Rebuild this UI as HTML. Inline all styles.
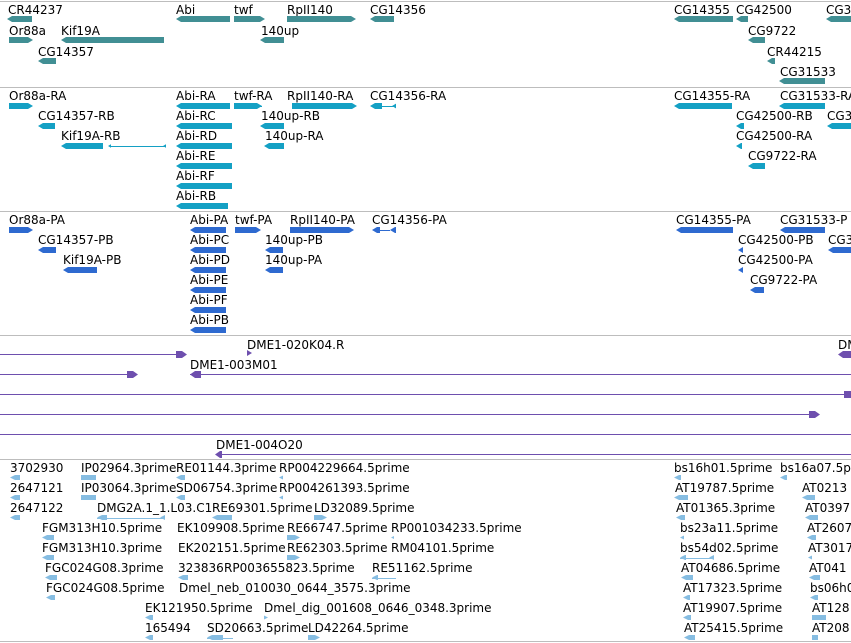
<!DOCTYPE html>
<html><head><meta charset="utf-8"><style>
body{margin:0;width:851px;height:643px;background:#fff;position:relative;overflow:hidden;font-family:"DejaVu Sans","Liberation Sans",sans-serif;font-size:12px;color:#000}
.t{position:absolute;white-space:nowrap;line-height:14px}
.b{position:absolute}
.s{position:absolute;left:0;width:851px;height:1px;background:#bdbdbd}
.L{clip-path:polygon(0 50%,5px 0,100% 0,100% 100%,5px 100%)}
.R{clip-path:polygon(0 0,calc(100% - 5px) 0,100% 50%,calc(100% - 5px) 100%,0 100%)}
</style></head><body>
<div id="c"></div>
<script>
var h='';
function T(x,y,s){h+='<div class="t" style="left:'+x+'px;top:'+(y+1)+'px">'+s+'</div>';}
function B(x,y,w,c,d,ht){ht=ht||6;h+='<div class="b '+(d||'')+'" style="left:'+x+'px;top:'+y+'px;width:'+w+'px;height:'+ht+'px;background:'+c+'"></div>';}
function Ln(x,y,w,c){h+='<div class="b" style="left:'+x+'px;top:'+y+'px;width:'+w+'px;height:1px;background:'+c+'"></div>';}
[1,87,211,335,459,641].forEach(function(y){h+='<div class="s" style="top:'+y+'px"></div>';});
var c1='#418f94';
[[8,2,'CR44237'],[176,2,'Abi'],[234,2,'twf'],[287,2,'RpII140'],[370,2,'CG14356'],[674,2,'CG14355'],[736,2,'CG42500'],[826,2,'CG3'],
[9,23,'Or88a'],[61,23,'Kif19A'],[261,23,'140up'],[748,23,'CG9722'],[38,44,'CG14357'],[767,44,'CR44215'],[780,64,'CG31533']].forEach(function(a){T(a[0],a[1],a[2]);});
[[7,16,25,'L'],[176,16,54,'L'],[234,16,31,'R'],[287,16,69,'R'],[370,16,24,'L'],[674,16,59,'L'],[736,16,12,'L'],[826,16,25,'L'],
[9,37,24,'R'],[61,37,103,'L'],[260,37,24,'L'],[748,37,17,'L'],[38,58,18,'L'],[767,58,8,'L'],[779,78,46,'L']].forEach(function(a){B(a[0],a[1],a[2],c1,a[3]);});
function track(c,dy,labels,bars,lines){labels.forEach(function(a){T(a[0],a[1]+dy,a[2]);});bars.forEach(function(a){B(a[0],a[1]+dy,a[2],c,a[3]);});(lines||[]).forEach(function(a){Ln(a[0],a[1]+dy,a[2],c);});}
var c2='#14a0c4';
track(c2,0,[[9,88,'Or88a-RA'],[176,88,'Abi-RA'],[234,88,'twf-RA'],[287,88,'RpII140-RA'],[370,88,'CG14356-RA'],[674,88,'CG14355-RA'],[780,88,'CG31533-RA'],
[38,108,'CG14357-RB'],[176,108,'Abi-RC'],[261,108,'140up-RB'],[736,108,'CG42500-RB'],[827,108,'CG3'],
[61,128,'Kif19A-RB'],[176,128,'Abi-RD'],[265,128,'140up-RA'],[736,128,'CG42500-RA'],
[176,148,'Abi-RE'],[748,148,'CG9722-RA'],[176,168,'Abi-RF'],[176,188,'Abi-RB']],
[[9,103,24,'R'],[176,103,54,'L'],[234,103,28,'R'],[292,103,65,'R'],[370,103,12,'L'],[392,103,4,'L'],[674,103,58,'L'],[779,103,46,'L'],
[38,123,17,'L'],[176,123,56,'L'],[260,123,24,'L'],[736,123,8,'L'],[827,123,24,'L'],
[61,143,42,'L'],[108,143,3,'L'],[163,143,3,'L'],[176,143,56,'L'],[264,143,20,'L'],[736,143,6,'L'],
[176,163,56,'L'],[748,163,17,'L'],[176,183,56,'L'],[176,203,52,'L']],
[[110,146,55],[234,106,28],[382,106,12]]);
var c3='#2e6ad0';
track(c3,0,[[9,212,'Or88a-PA'],[190,212,'Abi-PA'],[235,212,'twf-PA'],[290,212,'RpII140-PA'],[372,212,'CG14356-PA'],[676,212,'CG14355-PA'],[780,212,'CG31533-P'],
[38,232,'CG14357-PB'],[190,232,'Abi-PC'],[265,232,'140up-PB'],[738,232,'CG42500-PB'],[828,232,'CG3'],
[63,252,'Kif19A-PB'],[190,252,'Abi-PD'],[265,252,'140up-PA'],[738,252,'CG42500-PA'],
[190,272,'Abi-PE'],[750,272,'CG9722-PA'],[190,292,'Abi-PF'],[190,312,'Abi-PB']],
[[9,227,24,'R'],[190,227,36,'L'],[235,227,26,'R'],[290,227,64,'R'],[372,227,8,'L'],[390,227,6,'L'],[676,227,57,'L'],[780,227,45,'L'],
[38,247,18,'L'],[190,247,36,'L'],[265,247,18,'L'],[738,247,5,'L'],[828,247,23,'L'],
[63,267,34,'L'],[190,267,36,'L'],[265,267,18,'L'],[738,267,5,'L'],
[190,287,36,'L'],[750,287,14,'L'],[190,307,36,'L'],[190,327,36,'L']],[[380,230,10]]);
var c4='#6e4fae';
T(247,337,'DME1-020K04.R');T(190,357,'DME1-003M01');T(216,437,'DME1-004O20');T(838,337,'DM');
Ln(0,354,178,c4);B(176,351,11,c4,'R',7);B(247,350,5,c4,'R',6);B(838,351,13,c4,'L',7);
Ln(0,374,130,c4);B(127,371,11,c4,'R',7);Ln(190,374,661,c4);B(190,371,11,c4,'L',7);
Ln(0,394,851,c4);B(844,391,7,c4,'',7);
Ln(0,414,812,c4);B(809,411,11,c4,'R',7);
Ln(0,434,851,c4);
Ln(216,454,635,c4);B(215,451,7,c4,'L',7);
var c5='#86bde2';
var L5=[[10,0,'3702930'],[81,0,'IP02964.3prime'],[176,0,'RE01144.3prime'],[279,0,'RP004229664.5prime'],[674,0,'bs16h01.5prime'],[780,0,'bs16a07.5prime'],
[10,1,'2647121'],[81,1,'IP03064.3prime'],[176,1,'SD06754.3prime'],[279,1,'RP004261393.5prime'],[675,1,'AT19787.5prime'],[802,1,'AT0213'],
[10,2,'2647122'],[97,2,'DMG2A.1_1.L03.C1'],[212,2,'RE69301.5prime'],[314,2,'LD32089.5prime'],[676,2,'AT01365.3prime'],[805,2,'AT0397'],
[42,3,'FGM313H10.5prime'],[177,3,'EK109908.5prime'],[287,3,'RE66747.5prime'],[391,3,'RP001034233.5prime'],[680,3,'bs23a11.5prime'],[807,3,'AT2607'],
[42,4,'FGM313H10.3prime'],[178,4,'EK202151.5prime'],[287,4,'RE62303.5prime'],[391,4,'RM04101.5prime'],[680,4,'bs54d02.5prime'],[808,4,'AT3017'],
[45,5,'FGC024G08.3prime'],[178,5,'323836'],[224,5,'RP003655823.5prime'],[372,5,'RE51162.5prime'],[681,5,'AT04686.5prime'],[809,5,'AT041'],
[46,6,'FGC024G08.5prime'],[179,6,'Dmel_neb_010030_0644_3575.3prime'],[683,6,'AT17323.5prime'],[810,6,'bs06h01'],
[145,7,'EK121950.5prime'],[264,7,'Dmel_dig_001608_0646_0348.3prime'],[683,7,'AT19907.5prime'],[812,7,'AT128'],
[145,8,'165494'],[207,8,'SD20663.5prime'],[308,8,'LD42264.5prime'],[684,8,'AT25415.5prime'],[812,8,'AT208']];
L5.forEach(function(a){T(a[0],460+a[1]*20,a[2]);});
var B5=[[10,0,10,'L'],[81,0,15,''],[176,0,9,'L'],[279,0,4,'L'],[674,0,7,'L'],[780,0,7,'L'],
[10,1,10,'L'],[81,1,15,''],[176,1,9,'L'],[279,1,4,'L'],[674,1,14,'L'],[802,1,13,'L'],
[10,2,10,'L'],[212,2,20,'L'],[314,2,13,'R'],[676,2,9,'L'],[805,2,13,'L'],
[42,3,12,'L'],[287,3,13,'R'],[391,3,3,'L'],[680,3,4,'L'],[807,3,9,'L'],
[42,4,12,'L'],[287,4,13,'R'],[680,4,6,'L'],[808,4,4,'L'],
[45,5,12,'L'],[178,5,10,'L'],[372,5,6,'L'],[681,5,12,'L'],[809,5,11,'L'],
[46,6,9,'L'],[683,6,7,'L'],[810,6,8,'L'],
[145,7,8,'L'],[264,7,4,'R'],[683,7,8,'L'],[812,7,14,''],
[145,8,8,'L'],[207,8,16,'L'],[308,8,12,'R'],[684,8,11,'L'],[812,8,6,'']];
B5.forEach(function(a){B(a[0],475+a[1]*20,a[2],c5,a[3],5);});
Ln(97,518,67,c5);B(97,515,10,c5,'L',5);B(160,515,5,c5,'L',5);
Ln(372,578,24,c5);Ln(680,558,33,c5);B(709,555,5,c5,'L',5);Ln(207,638,26,c5);
document.getElementById('c').innerHTML=h;
</script>
</body></html>
